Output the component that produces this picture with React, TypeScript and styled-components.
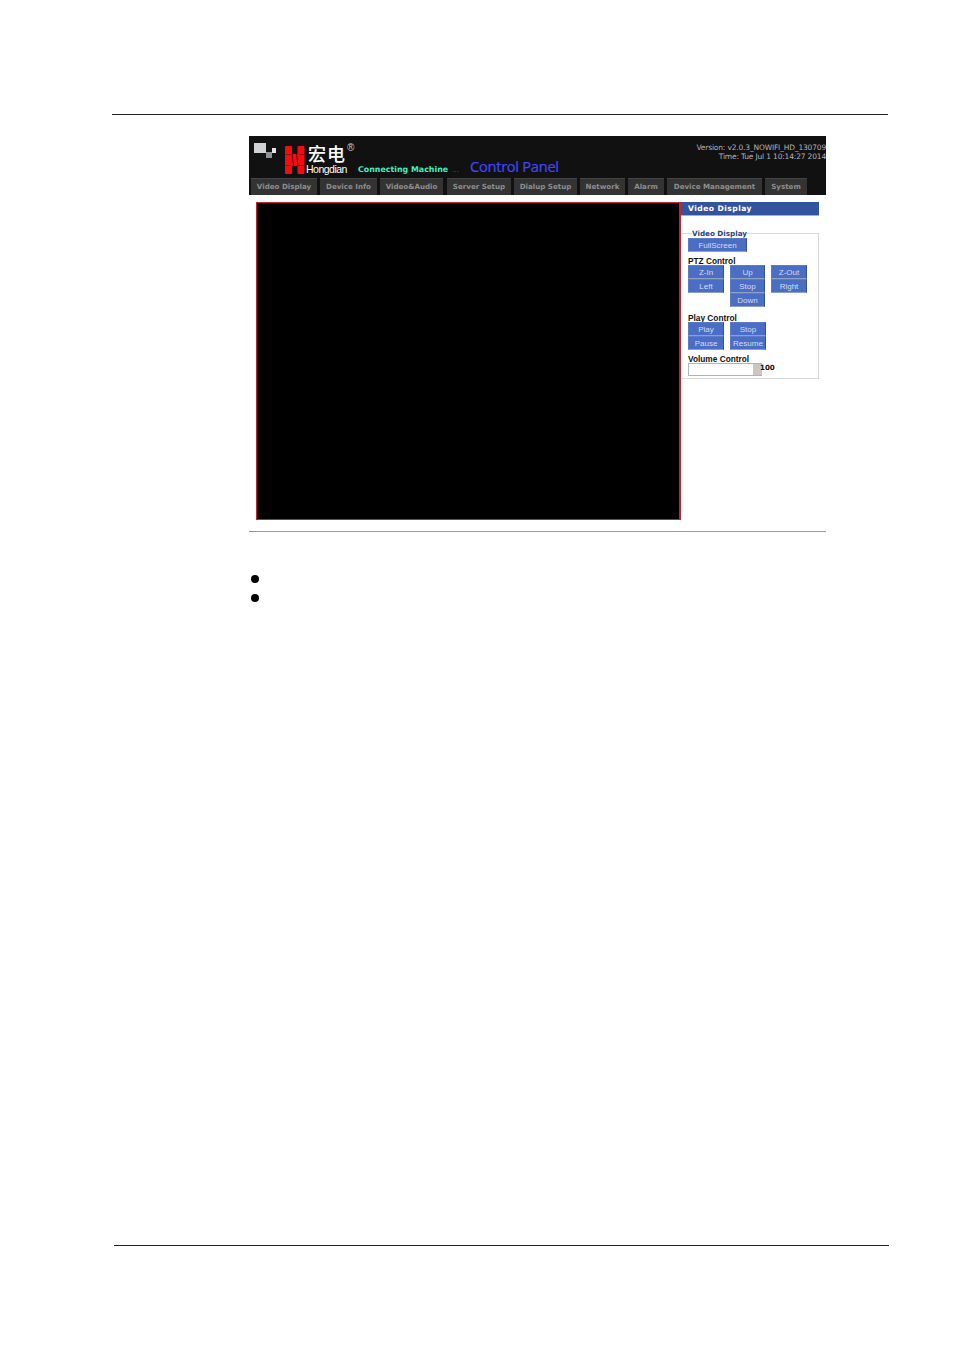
import styled, { createGlobalStyle } from "styled-components";

const GlobalStyle = createGlobalStyle`
  html, body {
    margin: 0;
    padding: 0;
    background: #fff;
  }
  body {
    font-family: "Liberation Sans", Arial, sans-serif;
  }
`;

const Page = styled.div`
  width: 954px;
  height: 1350px;
  display: flex;
  flex-direction: column;
  overflow: hidden;
`;

const TopRule = styled.div`
  height: 1px;
  background: #222;
  margin: 114px 66px 0 112px;
`;

const Shot = styled.div`
  width: 577px;
  margin: 21px 0 0 249px;
`;

const Header = styled.div`
  height: 59px;
  background: #111;
  display: flex;
  flex-direction: column;
`;

const HeaderTop = styled.div`
  height: 42px;
  display: flex;
  position: relative;
`;

const LogoWrap = styled.div`
  width: 106px;
  flex: none;
  display: flex;
  align-items: flex-start;
  padding: 6px 0 0 5px;
  box-sizing: border-box;
`;

const Brand = styled.div`
  margin-left: 1px;
  display: flex;
  flex-direction: column;
  color: #fff;
`;

const BrandCn = styled.span`
  font-family: "Noto Sans CJK SC", sans-serif;
  font-size: 18px;
  line-height: 18px;
  margin-top: 2px;
  margin-left: 2px;
  letter-spacing: 1px;
  font-weight: 500;
`;

const BrandEn = styled.span`
  font-size: 10.5px;
  line-height: 10px;
  margin-top: 2px;
  letter-spacing: -0.5px;
`;

const Registered = styled.span`
  position: absolute;
  left: 98px;
  top: 6px;
  font-size: 10px;
  line-height: 11px;
  color: #ccc;
`;

const Status = styled.div`
  align-self: flex-end;
  display: flex;
  align-items: baseline;
  margin-left: 3px;
  padding-bottom: 3px;
`;

const Connecting = styled.span`
  font-family: "DejaVu Sans", sans-serif;
  font-weight: bold;
  font-size: 7.9px;
  line-height: 11px;
  color: #3ff2bd;
  width: 94px;
  white-space: nowrap;
`;

const Dots = styled.span`
  font-size: 8px;
  color: #c83a28;
  width: 18px;
`;

const Title = styled.span`
  font-family: "Open Sans", sans-serif;
  font-size: 14.7px;
  line-height: 18px;
  color: #4446ff;
  letter-spacing: -0.3px;
  white-space: nowrap;
  -webkit-text-stroke: 0.2px #4446ff;
`;

const VersionBox = styled.div`
  position: absolute;
  right: 0;
  top: 6.5px;
  text-align: right;
  font-family: "DejaVu Sans", sans-serif;
  font-size: 7.5px;
  line-height: 9.5px;
  color: #b4b4b4;
  white-space: nowrap;
  letter-spacing: -0.17px;
`;

const Tabs = styled.div`
  height: 17px;
  display: flex;
  padding-left: 2px;
`;

const Tab = styled.div<{ $w: number; $gap: number }>`
  width: ${(p) => p.$w}px;
  margin-right: ${(p) => p.$gap}px;
  flex: none;
  background: #333;
  border-top: 1px solid #444;
  box-sizing: border-box;
  color: #8e8e8e;
  font-family: "DejaVu Sans", sans-serif;
  font-weight: bold;
  font-size: 7.1px;
  line-height: 16px;
  text-align: center;
  white-space: nowrap;
`;

const Body = styled.div`
  display: flex;
  margin: 7px 0 0 7px;
`;

const VideoArea = styled.div`
  width: 425px;
  height: 318px;
  box-sizing: border-box;
  flex: none;
  background: #000;
  border: 1px solid #c8222e;
  border-right-width: 2px;
`;

const Side = styled.div`
  width: 138px;
  flex: none;
`;

const SideTitle = styled.div`
  height: 14px;
  box-sizing: border-box;
  background: #34539e;
  border-bottom: 1px solid #9fb0d6;
  color: #fff;
  font-family: "DejaVu Sans", sans-serif;
  font-weight: bold;
  font-size: 7.6px;
  line-height: 14px;
  letter-spacing: 0.45px;
  padding-left: 7px;
`;

const Group = styled.fieldset`
  margin: 12px 0 0 0;
  padding: 0 0 0 6px;
  height: 151px;
  box-sizing: border-box;
  border: 1px solid #d8d8d8;
  border-left-color: #fff;
  min-width: 0;
`;

const GroupLegend = styled.legend`
  margin-left: 4px;
  padding: 0;
  color: #2a3f80;
  font-family: "DejaVu Sans", sans-serif;
  font-weight: bold;
  font-size: 7.2px;
  line-height: 12px;
  height: 10px;
`;

const Label = styled.div<{ $top: number }>`
  margin-top: ${(p) => p.$top}px;
  color: #111;
  font-family: "Liberation Sans", Arial, sans-serif;
  font-weight: bold;
  font-size: 8.3px;
  line-height: 10px;
  height: 9px;
  white-space: nowrap;
`;

const Btn = styled.div<{ $w?: number }>`
  width: ${(p) => p.$w ?? 36}px;
  height: 14px;
  box-sizing: border-box;
  background: #4a6ec4;
  border: 1px solid #5c7ccb;
  border-right-color: #3a4f86;
  border-bottom-color: #8f9fc6;
  color: #d4dcf0;
  font-family: "Liberation Sans", Arial, sans-serif;
  font-size: 8px;
  line-height: 13px;
  text-align: center;
  white-space: nowrap;
`;

const Columns = styled.div<{ $gap: number }>`
  display: flex;
  align-items: flex-start;
  gap: ${(p) => p.$gap}px;
`;

const Column = styled.div`
  display: flex;
  flex-direction: column;
`;

const VolumeRow = styled.div`
  display: flex;
  align-items: center;
`;

const Track = styled.div`
  width: 74px;
  height: 13px;
  box-sizing: border-box;
  background: #fff;
  border: 1px solid #aab4c8;
  border-right: 0;
  display: flex;
  justify-content: flex-end;
`;

const Thumb = styled.div`
  width: 9px;
  background: #c9c7c0;
`;

const VolumeValue = styled.span`
  margin-left: -2px;
  position: relative;
  color: #111;
  font-family: "DejaVu Sans", sans-serif;
  font-weight: bold;
  font-size: 7.1px;
  line-height: 10px;
  margin-top: -3px;
`;

const MidRule = styled.div`
  height: 1px;
  background: #9a9a9a;
  margin-top: 11px;
`;

const Bullets = styled.ul`
  list-style: none;
  margin: 43px 0 0 2px;
  padding: 0;
  display: flex;
  flex-direction: column;
  gap: 11px;
`;

const Bullet = styled.li`
  width: 8px;
  height: 8px;
  border-radius: 50%;
  background: #000;
`;

const BottomRule = styled.div`
  height: 1px;
  background: #222;
  margin: 643px 65px 0 114px;
`;

const tabs = [
  { label: "Video Display", w: 66, gap: 3 },
  { label: "Device Info", w: 57, gap: 3 },
  { label: "Video&Audio", w: 63, gap: 4 },
  { label: "Server Setup", w: 64, gap: 3 },
  { label: "Dialup Setup", w: 63, gap: 3 },
  { label: "Network", w: 45, gap: 3 },
  { label: "Alarm", w: 36, gap: 3 },
  { label: "Device Management", w: 95, gap: 3 },
  { label: "System", w: 42, gap: 0 },
];

function Logo() {
  return (
    <>
      <svg width="22" height="17" viewBox="0 0 22 17" style={{ flex: "none" }}>
        <rect x="0" y="1" width="12" height="10" fill="#d0d3d6" />
        <rect x="12" y="10" width="6" height="6" fill="#8e9094" />
        <rect x="18" y="6" width="4" height="5" fill="#e4e4e4" />
      </svg>
      <svg width="20" height="28" viewBox="0 0 20 28" style={{ flex: "none", marginLeft: 9, marginTop: 4 }}>
        <rect x="0" y="0" width="7" height="28" rx="1" fill="#f20d12" />
        <rect x="12.5" y="0" width="7" height="28" rx="1" fill="#f20d12" />
        <rect x="5" y="8" width="10" height="12" fill="#f20d12" />
        <path d="M7 8 L8.5 20 M11.5 8 L13 20" stroke="#5a0808" strokeWidth="0.9" />
        <path d="M0 8.5 H6 M14 8.5 H20 M0 19.5 H6 M14 19.5 H20" stroke="#8a0a0a" strokeWidth="0.7" />
      </svg>
    </>
  );
}

export default function App() {
  return (
    <Page>
      <GlobalStyle />
      <TopRule />
      <Shot>
        <Header>
          <HeaderTop>
            <LogoWrap>
              <Logo />
              <Brand>
                <BrandCn>宏电</BrandCn>
                <BrandEn>Hongdian</BrandEn>
              </Brand>
              <Registered>®</Registered>
            </LogoWrap>
            <Status>
              <Connecting>Connecting Machine</Connecting>
              <Dots>...</Dots>
              <Title>Control Panel</Title>
            </Status>
            <VersionBox>
              Version: v2.0.3_NOWIFI_HD_130709
              <br />
              Time: Tue Jul 1 10:14:27 2014
            </VersionBox>
          </HeaderTop>
          <Tabs>
            {tabs.map((t) => (
              <Tab key={t.label} $w={t.w} $gap={t.gap}>
                {t.label}
              </Tab>
            ))}
          </Tabs>
        </Header>
        <Body>
          <VideoArea />
          <Side>
            <SideTitle>Video Display</SideTitle>
            <Group>
              <GroupLegend>Video Display</GroupLegend>
              <Btn $w={59}>FullScreen</Btn>
              <Label $top={4}>PTZ Control</Label>
              <Columns $gap={6}>
                <Column>
                  <Btn>Z-In</Btn>
                  <Btn>Left</Btn>
                </Column>
                <Column>
                  <Btn $w={35}>Up</Btn>
                  <Btn $w={35}>Stop</Btn>
                  <Btn $w={35}>Down</Btn>
                </Column>
                <Column>
                  <Btn>Z-Out</Btn>
                  <Btn>Right</Btn>
                </Column>
              </Columns>
              <Label $top={6}>Play Control</Label>
              <Columns $gap={6}>
                <Column>
                  <Btn>Play</Btn>
                  <Btn>Pause</Btn>
                </Column>
                <Column>
                  <Btn>Stop</Btn>
                  <Btn>Resume</Btn>
                </Column>
              </Columns>
              <Label $top={4}>Volume Control</Label>
              <VolumeRow>
                <Track>
                  <Thumb />
                </Track>
                <VolumeValue>100</VolumeValue>
              </VolumeRow>
            </Group>
          </Side>
        </Body>
        <MidRule />
        <Bullets>
          <Bullet />
          <Bullet />
        </Bullets>
      </Shot>
      <BottomRule />
    </Page>
  );
}
